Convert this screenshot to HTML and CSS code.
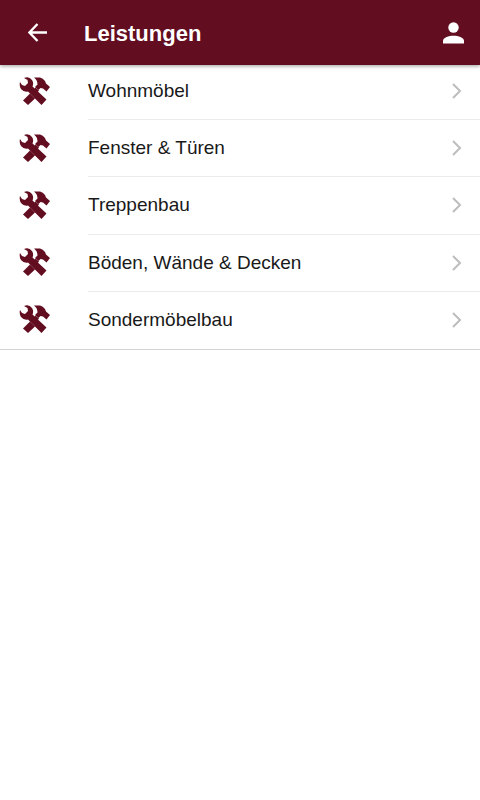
FILE: index.html
```html
<!DOCTYPE html>
<html lang="de">
<head>
<meta charset="utf-8">
<meta name="viewport" content="width=device-width, initial-scale=1">
<title>Leistungen</title>
<link rel="stylesheet" href="styles.css">
</head>
<body>
<svg class="defs" aria-hidden="true">
  <symbol id="tools" viewBox="0 0 32 30">
    <path d="M5 1 Q10 -1 13 3 Q15 6 13.500 9.500 L27.500 22.500 L22.500 28 L9 14.500 Q5 15.500 2 12 Q0 9 1 5 L3 8 L6 9 L9 6 L8.500 3 Z"/>
    <path d="M15 .5 L21 .5 Q24 1 26 4 L27 6.500 L31 10 L27.500 14.500 L24 11.500 L21.500 11 L19.500 13 L16 10 L18.500 7.500 Q18.500 3 15 .5 Z"/>
    <path d="M11 16.500 L16 21.500 L9 28 L4 23.500 Z"/>
    <path d="M16.500 10.500 L20 13.500 L17.500 16.500 L14 13.500 Z"/>
  </symbol>
  <symbol id="chevron" viewBox="0 0 12 16">
    <path d="M2 1 L9 8 L2 15" fill="none" stroke="currentColor" stroke-width="2"/>
  </symbol>
</svg>
<header class="bar">
  <button class="bar-button" type="button" aria-label="Zurück">
    <svg class="bar-icon" viewBox="0 0 20 20" aria-hidden="true"><path d="M10 1 L1.500 10 L10 19 M1.500 10 H20" fill="none" stroke="currentColor" stroke-width="2.500"/></svg>
  </button>
  <h1 class="title">Leistungen</h1>
  <button class="bar-button" type="button" aria-label="Profil">
    <svg class="user-icon" viewBox="0 0 22 22" aria-hidden="true"><circle cx="11.500" cy="5.500" r="5.200"/><path d="M1 21.500 V18.500 C2 12 21 12 22 18.500 V21.500 Z"/></svg>
  </button>
</header>
<main>
  <ul class="list">
    <li><a class="item" href="#"><svg class="tools" aria-hidden="true"><use href="#tools"/></svg><span class="label">Wohnmöbel<svg class="chevron" aria-hidden="true"><use href="#chevron"/></svg></span></a></li>
    <li><a class="item" href="#"><svg class="tools" aria-hidden="true"><use href="#tools"/></svg><span class="label">Fenster &amp; Türen<svg class="chevron" aria-hidden="true"><use href="#chevron"/></svg></span></a></li>
    <li><a class="item" href="#"><svg class="tools" aria-hidden="true"><use href="#tools"/></svg><span class="label">Treppenbau<svg class="chevron" aria-hidden="true"><use href="#chevron"/></svg></span></a></li>
    <li><a class="item" href="#"><svg class="tools" aria-hidden="true"><use href="#tools"/></svg><span class="label">Böden, Wände &amp; Decken<svg class="chevron" aria-hidden="true"><use href="#chevron"/></svg></span></a></li>
    <li><a class="item" href="#"><svg class="tools" aria-hidden="true"><use href="#tools"/></svg><span class="label">Sondermöbelbau<svg class="chevron" aria-hidden="true"><use href="#chevron"/></svg></span></a></li>
  </ul>
</main>
</body>
</html>
```
FILE: styles.css
```css
* { box-sizing: border-box; }
body {
  margin: 0;
  background: #fff;
  color: #191919;
  font-family: "Liberation Sans", Arial, sans-serif;
}
.defs { position: absolute; width: 0; height: 0; }
.bar {
  position: relative;
  z-index: 1;
  display: flex;
  align-items: center;
  min-height: 65px;
  padding: 0 16px 0 28px;
  background: #620d20;
  color: #fff;
  box-shadow: 0 1px 4px rgba(0, 0, 0, 0.4);
}
.bar-button {
  display: flex;
  padding: 0;
  border: 0;
  background: none;
  color: inherit;
}
.bar-icon { width: 19px; height: 19px; }
.user-icon { width: 22px; height: 22px; fill: currentColor; }
.title {
  flex: 1;
  margin: 0 0 0 37px;
  padding-top: 2px;
  font-size: 22px;
  line-height: 28px;
  font-weight: 700;
}
.list {
  display: grid;
  grid-auto-rows: 1fr;
  min-height: 287px;
  margin: -2px 0 0;
  padding: 0;
  border-bottom: 1px solid #d4d4d4;
  list-style: none;
}
.item {
  display: flex;
  align-items: center;
  height: 100%;
  padding-left: 19px;
  color: inherit;
  text-decoration: none;
}
.tools { width: 32px; height: 30px; margin-right: 37px; fill: #620d20; }
.label {
  display: flex;
  flex: 1;
  align-items: center;
  justify-content: space-between;
  align-self: stretch;
  padding-right: 17px;
  border-bottom: 1px solid #ebebeb;
  font-size: 19px;
  line-height: 24px;
}
.list li:last-child .label { border-bottom: 0; }
.chevron { width: 12px; height: 16px; color: #bdbdbd; }
```
